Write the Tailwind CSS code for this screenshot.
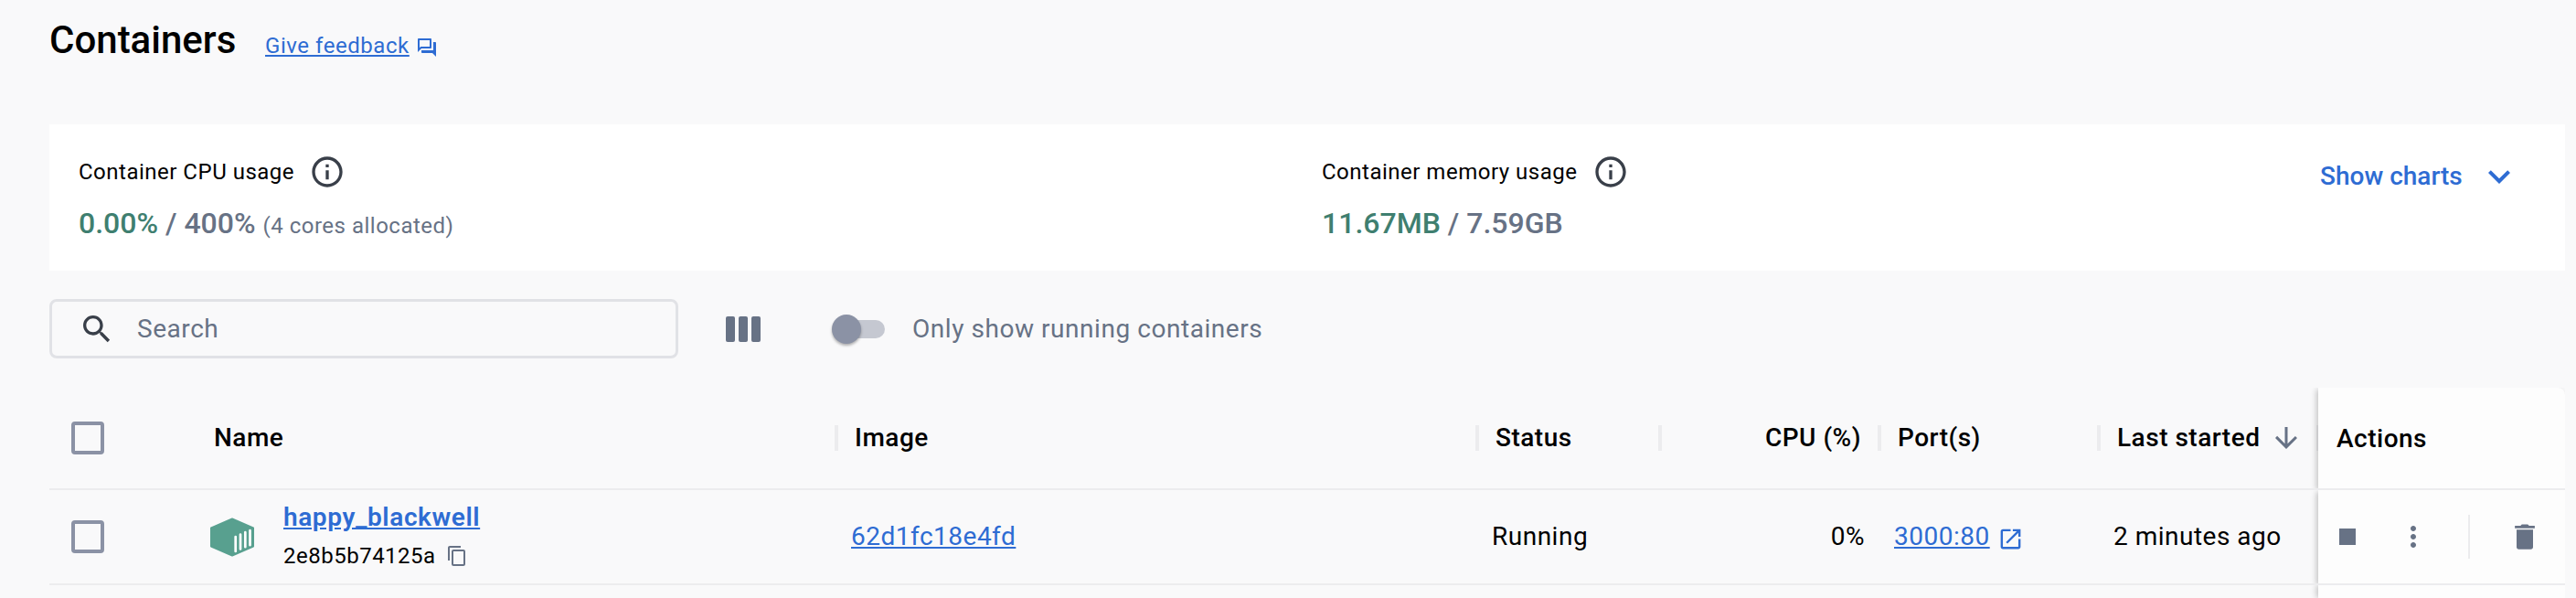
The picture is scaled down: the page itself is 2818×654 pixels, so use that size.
<!DOCTYPE html>
<html lang="en">
<head>
<meta charset="utf-8">
<title>Containers</title>
<script src="https://cdn.jsdelivr.net/npm/@tailwindcss/browser@4"></script>
</head>
<body class="w-[2818px] h-[654px] overflow-hidden bg-[#f9f9fa] font-['Roboto',sans-serif] text-black pl-[54px] pr-3 flex flex-col">
  <header class="h-[136px] flex items-start shrink-0">
    <h1 class="mt-5 w-[236px] text-[42px] leading-[48px] font-medium whitespace-nowrap">Containers</h1>
    <a class="mt-[34px] text-[24px] leading-8 tracking-[0.55px] underline text-[#2e6cd3] whitespace-nowrap">Give feedback</a>
    <svg class="size-6 mt-10 ml-[7px] fill-[#2e6cd3]" viewBox="0 0 24 24"><path d="M15 4v7H5.17L4 12.17V4h11m1-2H3c-.55 0-1 .45-1 1v14l4-4h10c.55 0 1-.45 1-1V3c0-.55-.45-1-1-1zm5 4h-2v9H6v2c0 .55.45 1 1 1h11l4 4V7c0-.55-.45-1-1-1z"/></svg>
  </header>

  <section class="h-40 bg-white flex shrink-0 pl-8">
    <div class="w-[1360px] pt-8">
      <div class="flex items-center h-10">
        <span class="text-[24px] tracking-[0.5px]">Container CPU usage</span>
        <svg class="size-10 ml-4 fill-[#393f49]" viewBox="0 0 24 24"><path d="M11 7h2v2h-2zm0 4h2v6h-2zm1-9C6.48 2 2 6.48 2 12s4.48 10 10 10 10-4.48 10-10S17.52 2 12 2zm0 18c-4.41 0-8-3.59-8-8s3.59-8 8-8 8 3.59 8 8-3.59 8-8 8z"/></svg>
      </div>
      <div class="mt-4 leading-10 text-[#677285] whitespace-nowrap"><span class="text-[32px] font-medium"><span class="text-[#3f7f70]">0.00%</span> / 400%</span><span class="text-[24px] tracking-[0.5px] ml-2">(4 cores allocated)</span></div>
    </div>
    <div class="w-[1092px] pt-8">
      <div class="flex items-center h-10">
        <span class="text-[24px] tracking-[0.5px]">Container memory usage</span>
        <svg class="size-10 ml-[17px] fill-[#393f49]" viewBox="0 0 24 24"><path d="M11 7h2v2h-2zm0 4h2v6h-2zm1-9C6.48 2 2 6.48 2 12s4.48 10 10 10 10-4.48 10-10S17.52 2 12 2zm0 18c-4.41 0-8-3.59-8-8s3.59-8 8-8 8 3.59 8 8-3.59 8-8 8z"/></svg>
      </div>
      <div class="mt-4 leading-10 text-[32px] font-medium text-[#677285] whitespace-nowrap"><span class="text-[#3f7f70]">11.67MB</span> / 7.59GB</div>
    </div>
    <div class="flex items-center h-12 mt-[33px] text-[#2e6cd3]">
      <span class="w-[172px] text-[28px] font-medium whitespace-nowrap">Show charts</span>
      <svg class="size-12 fill-current" viewBox="0 0 24 24"><path d="M16.59 8.59 12 13.17 7.41 8.59 6 10l6 6 6-6z"/></svg>
    </div>
  </section>

  <div class="mt-[31px] h-[65px] flex items-center shrink-0 text-[28px] text-[#677285]">
    <div class="w-[688px] h-[65px] border-3 border-[#e1e2e6] rounded-lg flex items-center pl-[29px]">
      <svg class="size-10 fill-[#393f49]" viewBox="0 0 24 24"><path d="M15.5 14h-.79l-.28-.27C15.41 12.59 16 11.11 16 9.5 16 5.91 13.09 3 9.5 3S3 5.91 3 9.5 5.91 16 9.5 16c1.61 0 3.09-.59 4.23-1.57l.27.28v.79l5 4.99L20.49 19l-4.99-5zm-6 0C7.01 14 5 11.99 5 9.5S7.01 5 9.5 5 14 7.01 14 9.5 11.99 14 9.5 14z"/></svg>
      <span class="ml-6 tracking-[0.55px]">Search</span>
    </div>
    <div class="ml-[52px] flex gap-1">
      <i class="w-2.5 h-7 rounded-xs bg-[#677285]"></i><i class="w-2.5 h-7 rounded-xs bg-[#677285]"></i><i class="w-2.5 h-7 rounded-xs bg-[#677285]"></i>
    </div>
    <div class="ml-20 w-14 h-5 rounded-full bg-[#c5c8d1] flex items-center">
      <i class="size-8 -ml-0.5 shrink-0 rounded-full bg-[#8b92a5] shadow-[0_2px_3px_rgba(0,0,0,0.3)]"></i>
    </div>
    <span class="ml-[30px] tracking-[0.55px] whitespace-nowrap">Only show running containers</span>
  </div>

  <main class="mt-8 flex grow min-h-0">
    <div class="w-[2482px] shrink-0">
      <div class="h-28 border-b-2 border-[#ececee] flex items-center text-[28px] font-medium tracking-[0.5px] whitespace-nowrap">
        <div class="w-[180px] shrink-0 pl-6"><i class="block size-9 border-4 border-[#8b92a5] rounded-sm"></i></div>
        <div class="w-[679px] shrink-0">Name</div>
        <i class="w-1 h-7 shrink-0 bg-[#ececee]"></i>
        <div class="w-[697px] shrink-0 pl-[18px]">Image</div>
        <i class="w-1 h-7 shrink-0 bg-[#ececee]"></i>
        <div class="w-[196px] shrink-0 pl-[18px]">Status</div>
        <i class="w-1 h-7 shrink-0 bg-[#ececee]"></i>
        <div class="w-[236px] shrink-0 pr-[18px] text-right">CPU (%)</div>
        <i class="w-1 h-7 shrink-0 bg-[#ececee]"></i>
        <div class="w-[236px] shrink-0 pl-[18px]">Port(s)</div>
        <i class="w-1 h-7 shrink-0 bg-[#ececee]"></i>
        <div class="w-[236px] shrink-0 pl-[18px] flex items-center">Last started
          <svg class="size-9 ml-[11px] fill-[#677285]" viewBox="0 0 24 24"><path d="m20 12-1.41-1.41L13 16.17V4h-2v12.17l-5.58-5.59L4 12l8 8 8-8z"/></svg>
        </div>
        <i class="w-0.5 h-7 shrink-0 bg-[#ececee]"></i>
      </div>
      <div class="h-[104px] border-b-2 border-[#ececee] flex items-center text-[28px] tracking-[0.5px] whitespace-nowrap">
        <div class="w-[176px] shrink-0 pl-6"><i class="block size-9 border-4 border-[#8b92a5] rounded-sm"></i></div>
        <svg class="w-12 h-[43px] shrink-0" viewBox="0 0 48 43"><path d="M24 1.500 47 11.500V31.500L24 41.500 1 31.500V11.500Z" fill="#58a08f" stroke="#58a08f" stroke-width="2" stroke-linejoin="round"/><path d="M27.700 21V37M33 18.500V34.500M38.300 16.200V32.200M43.500 14.200V30.200" stroke="#fff" stroke-width="2.700" stroke-linecap="round"/></svg>
        <div class="w-[619px] shrink-0 pl-8">
          <div class="leading-[42px] pb-px -mt-0.5 font-semibold tracking-[0.6px] underline text-[#2e6cd3]">happy_blackwell</div>
          <div class="flex items-center text-[24px] leading-10">2e8b5b74125a
            <svg class="size-6 ml-[11px] fill-[#677285]" viewBox="0 0 24 24"><path d="M16 1H4c-1.100 0-2 .9-2 2v14h2V3h12V1zm3 4H8c-1.100 0-2 .9-2 2v14c0 1.100.9 2 2 2h11c1.100 0 2-.9 2-2V7c0-1.100-.9-2-2-2zm0 16H8V7h11v14z"/></svg>
          </div>
        </div>
        <div class="w-[701px] shrink-0 pl-[34px]"><span class="underline text-[#2e6cd3]">62d1fc18e4fd</span></div>
        <div class="w-[200px] shrink-0 pl-[34px]">Running</div>
        <div class="w-[242px] shrink-0 text-right">0%</div>
        <div class="w-[240px] shrink-0 pl-8 flex items-center text-[#2e6cd3]"><span class="underline">3000:80</span>
          <svg class="size-[29px] ml-2 mt-1 fill-current" viewBox="0 0 24 24"><path d="M19 19H5V5h7V3H5c-1.110 0-2 .9-2 2v14c0 1.100.89 2 2 2h14c1.100 0 2-.9 2-2v-7h-2v7zM14 3v2h3.590l-9.830 9.830 1.410 1.410L19 6.410V10h2V3h-7z"/></svg>
        </div>
        <div class="shrink-0 pl-8">2 minutes ago</div>
      </div>
    </div>
    <div class="w-[270px] shrink-0 flex flex-col">
      <div class="h-[110px] shrink-0 bg-[#fdfdfd] rounded-tr-lg shadow-[-2px_2px_6px_rgba(0,0,0,0.22)] [clip-path:inset(0_0_0_-12px)] flex items-center pl-5 pt-0.5 text-[28px] font-medium tracking-[0.5px]">Actions</div>
      <i class="h-0.5 shrink-0 bg-[#ececee]"></i>
      <div class="h-[102px] shrink-0 bg-[#fdfdfd] shadow-[-2px_2px_6px_rgba(0,0,0,0.22)] [clip-path:inset(0_0_0_-12px)] flex items-center pl-[23px]">
        <i class="size-[18px] bg-[#677285]"></i>
        <svg class="size-9 ml-[45px] fill-[#677285]" viewBox="0 0 24 24"><path d="M12 8c1.100 0 2-.9 2-2s-.9-2-2-2-2 .9-2 2 .9 2 2 2zm0 2c-1.100 0-2 .9-2 2s.9 2 2 2 2-.9 2-2-.9-2-2-2zm0 6c-1.100 0-2 .9-2 2s.9 2 2 2 2-.9 2-2-.9-2-2-2z"/></svg>
        <i class="ml-[42px] w-0.5 h-12 bg-[#ececee]"></i>
        <svg class="size-9 ml-[42px] fill-[#677285]" viewBox="0 0 24 24"><path d="M6 19.500c0 .9.700 1.600 1.600 1.600h8.800c.9 0 1.600-.7 1.600-1.600V6.900H6zM19.250 4h-4.100l-1-1h-4.300l-1 1h-4.100v1.800h14.500z"/></svg>
      </div>
      <i class="h-0.5 shrink-0 bg-[#ececee]"></i>
      <div class="grow bg-[#fdfdfd] shadow-[-2px_0_6px_rgba(0,0,0,0.22)] [clip-path:inset(0_0_0_-12px)]"></div>
    </div>
  </main>
</body>
</html>
